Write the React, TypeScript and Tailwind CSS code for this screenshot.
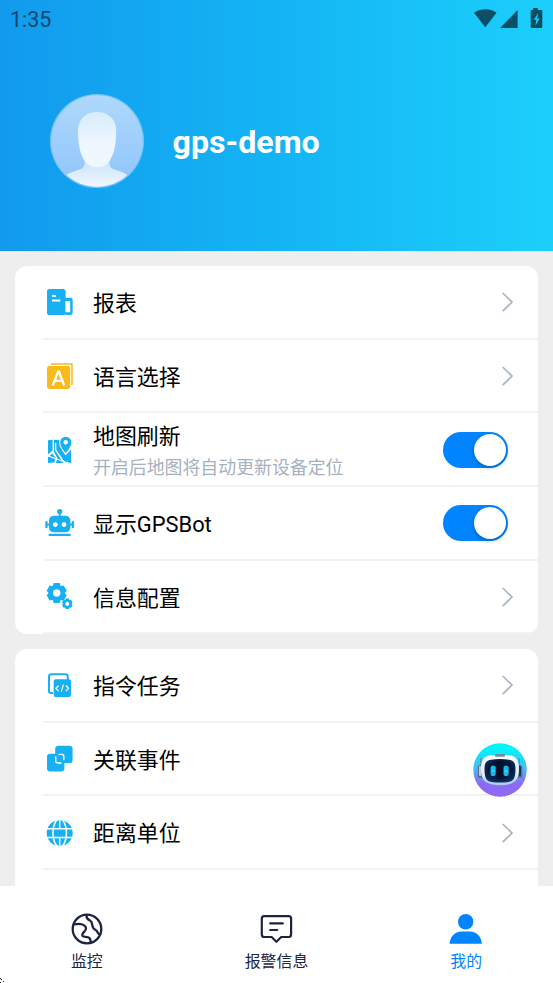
import type { ReactNode } from 'react';

const BLUE = '#17b0f3';

const ReportIcon = () => (
    <svg width="28" height="28" viewBox="0 0 28 28" fill={BLUE}>
        <rect x="18" y="9.7" width="8.7" height="17.3" rx="2.4" />
        <rect x="1" y="1" width="18.6" height="26" rx="2.6" />
        <path fill="#fff" d="M6 7h4v2H6zM6 11.4h8.3v2.2H6zM19.4 13h4.8v11.3h-4.8z" />
    </svg>
);

const LanguageIcon = () => (
    <svg width="28" height="28" viewBox="0 0 28 28" fill="#f9bb1b">
        <path d="M5 2h21v21" fill="none" stroke="#f9bb1b" strokeWidth="1.5" />
        <rect x="1" y="4" width="23.2" height="23" rx="2.4" />
        <path d="M6.800 23.500 12 9.700h1l5.200 13.800M8.600 18.800h7.800" fill="none" stroke="#fff" strokeWidth="2.300" />
    </svg>
);

const MapIcon = () => (
    <svg width="28" height="28" viewBox="0 0 28 28" fill={BLUE}>
        <path d="M2 4.2 6.600 3.800v10.600L2 18.600z" />
        <path d="M8 3.800 14 4.200c-.8 3 .3 6.200 2.200 9.500L19.500 19 25 14V27H9.800L11.500 22.500 8 16z" />
        <path d="M2 21.200 6.300 17.600 9.800 22 8.200 26.500 2 27z" />
        <path d="M9.600 7v7l8.800 13" fill="none" stroke="#fff" strokeWidth="1.400" />
        <path d="M2 19.800 9 22.500 25 27.800" fill="none" stroke="#fff" strokeWidth="1.100" />
        <path d="M19.700 .7a5.500 5.500 0 0 0-5.500 5.500c0 4 3 7.800 5.500 11 2.500-3.200 5.600-7 5.600-11A5.500 5.500 0 0 0 19.700.7z" stroke="#fff" strokeWidth="2.400" paintOrder="stroke" />
        <circle cx="19.700" cy="6.200" r="2.200" fill="#fff" />
    </svg>
);

const RobotIcon = () => (
    <svg className="overflow-visible" width="28" height="28" viewBox="0 0 28 28" fill={BLUE}>
        <circle cx="13.700" cy="2.600" r="2.600" />
        <path d="M12.800 4h1.800v4h-1.800z" />
        <path d="M8 6.800h11.400c3.200 0 5 2 5 5v6.400c0 3-1.800 5-5 5H8c-3.200 0-5-2-5-5v-6.400c0-3 1.800-5 5-5z" />
        <rect x="-.7" y="12" width="2.300" height="7.300" rx="1" />
        <rect x="25.700" y="12" width="2.300" height="7.300" rx="1" />
        <path d="M1 14.500h25.500v2H1z" />
        <rect x="2.700" y="24.700" width="21.800" height="2.400" rx=".6" />
        <circle cx="9.300" cy="15.600" r="2.400" fill="#fff" />
        <circle cx="18" cy="15.600" r="2.400" fill="#fff" />
    </svg>
);

const Gear = ({ cx, cy, scale }: { cx: number; cy: number; scale: number }) => (
    <g transform={`translate(${cx} ${cy}) scale(${scale})`}>
        {[0, 60, 120, 180, 240, 300].map(a => (
            <path key={a} d="M-4.200-6-3-9.900h6L4.200-6z" transform={`rotate(${a})`} />
        ))}
        <circle r="5.900" fill="none" stroke={BLUE} strokeWidth="4.200" />
    </g>
);

const GearsIcon = () => (
    <svg width="28" height="28" viewBox="0 0 28 28" fill={BLUE}>
        <Gear cx={10.7} cy={10} scale={1} />
        <Gear cx={21.3} cy={20.8} scale={0.53} />
    </svg>
);

const CommandIcon = () => (
    <svg width="28" height="28" viewBox="0 0 28 28" fill={BLUE}>
        <rect x="3" y="3.200" width="18.800" height="18.800" rx="2.200" fill="none" stroke={BLUE} strokeWidth="2" />
        <rect x="7" y="7.500" width="19" height="19.500" rx="2.500" fill="#fff" />
        <path d="M20.800 7h2v3h-2z" />
        <rect x="7.700" y="8.300" width="17.400" height="17.700" rx="2.200" />
        <path d="m12.600 14.500-2.700 2.800 2.700 2.800M19.900 14.500l2.700 2.800-2.700 2.800M17.400 13.600l-2.200 7.300" fill="none" stroke="#fff" strokeWidth="1.200" />
    </svg>
);

const LinkIcon = () => (
    <svg width="28" height="28" viewBox="0 0 28 28" fill={BLUE}>
        <rect x="9.200" y=".7" width="17.400" height="17.400" rx="3.200" />
        <rect x="1" y="8.800" width="17.400" height="17.600" rx="3.200" />
        <path d="M9.700 11.500v4.300c0 1.500.7 2.200 2.200 2.200h3.600M12.500 9.400h3.200c1.400 0 2.100.7 2.100 2.100v3.800" fill="none" stroke="#fff" strokeWidth="1.400" />
    </svg>
);

const GlobeIcon = () => (
    <svg width="28" height="28" viewBox="0 0 28 28">
        <circle cx="13.700" cy="14" r="13" fill={BLUE} />
        <g fill="none" stroke="#fff" strokeWidth="1.500">
            <path d="M0 9.700h28M0 18.500h28M13.700 0v9M13.700 19v9" />
            <ellipse cx="13.700" cy="14" rx="6.800" ry="14" />
        </g>
    </svg>
);

const Chevron = () => (
    <svg width="14" height="22" viewBox="0 0 14 22" fill="none" stroke="#a9b4c2" strokeWidth="1.700">
        <path d="m2.700 2 9.300 9.100-9.300 9.100" />
    </svg>
);

const Toggle = () => (
    <div className="mr-[6px] flex h-9 w-[65.500px] items-center justify-end rounded-full bg-[#0084ff] pr-[2px]">
        <div className="size-8 rounded-full bg-white shadow-[0_2px_4px_rgba(0,0,0,0.25)]" />
    </div>
);

interface RowProps {
    icon: ReactNode;
    label: string;
    hint?: string;
    toggle?: boolean;
    control?: boolean;
}

const Row = ({ icon, label, hint, toggle, control = true }: RowProps) => (
    <div className="ml-7 flex h-[73.700px] shrink-0 items-center border-b-2 border-[#f2f2f2] pl-[3px] pr-6 pt-px">
        {icon}
        <div className={hint ? 'ml-[19px] flex-1 pt-1' : 'ml-[19px] flex-1 pt-[2px]'}>
            <div className="text-[21.900px] leading-[31px] text-black">{label}</div>
            {hint && <div className="text-[17.900px] leading-[31px] text-[#a5b1c0]">{hint}</div>}
        </div>
        {toggle ? <Toggle /> : control && <Chevron />}
    </div>
);

const BotBadge = () => (
    <svg className="absolute left-[472px] top-[742px]" width="56" height="56" viewBox="0 0 56 56">
        <defs>
            <linearGradient id="botBg" x1="0" y1="0" x2="0" y2="1">
                <stop offset="0.1" stopColor="#02f5f8" />
                <stop offset="0.5" stopColor="#4eb4f5" />
                <stop offset="0.75" stopColor="#8b6cf4" />
                <stop offset="1" stopColor="#9068f0" />
            </linearGradient>
            <linearGradient id="botHead" x1="0" y1="0" x2="0" y2="1">
                <stop offset="0" stopColor="#ffffff" />
                <stop offset="0.7" stopColor="#dfe9f5" />
                <stop offset="1" stopColor="#a8c4ee" />
            </linearGradient>
            <radialGradient id="botFace" cx="0.5" cy="0.45" r="0.65">
                <stop offset="0.5" stopColor="#03112b" />
                <stop offset="1" stopColor="#064080" />
            </radialGradient>
        </defs>
        <circle cx="28" cy="28" r="27.500" fill="#fff" />
        <circle cx="28" cy="28" r="26.700" fill="url(#botBg)" />
        <path d="M8.700 16v10M47.300 16v10" stroke="#5c8dad" strokeWidth="1.200" />
        <rect x="5.800" y="23" width="6" height="13" rx="2.500" fill="#54708f" />
        <rect x="44.200" y="23" width="6" height="13" rx="2.500" fill="#54708f" />
        <rect x="7" y="24" width="2.500" height="10" rx="1" fill="#bcd0e2" />
        <rect x="46.500" y="24" width="2.500" height="10" rx="1" fill="#1e3657" />
        <path d="M20 13.200h16c8 0 11 5 11 14 0 11-5 16-19 16S9 38.200 9 27.200c0-9 3-14 11-14z" fill="url(#botHead)" />
        <rect x="23" y="12" width="10" height="2.800" rx="1.200" fill="#6d8da9" />
        <path d="M19 17.700c6-1 12-1 18 0 5 .8 6.500 3.500 6.500 9 0 9.500-2 12.500-7 13.200-5.500.8-11.500.8-17 0-5-.7-7-3.700-7-13.200 0-5.500 1.500-8.200 6.500-9z" fill="url(#botFace)" />
        <rect x="18.500" y="23.500" width="5.200" height="10.500" rx="2.600" fill="#15b9ed" />
        <rect x="31.500" y="23.500" width="5.200" height="10.500" rx="2.600" fill="#15b9ed" />
        <path d="M19.200 29h4M32.200 29h4" stroke="#4ad9f8" />
    </svg>
);

const Avatar = () => (
    <svg width="94" height="94" viewBox="0 0 94 94">
        <defs>
            <linearGradient id="avBg" x1="0" y1="0" x2="0" y2="1">
                <stop offset="0" stopColor="#afd8fc" />
                <stop offset="1" stopColor="#8fc5fa" />
            </linearGradient>
            <linearGradient id="avFace" x1="0" y1="0" x2="0" y2="1">
                <stop offset="0" stopColor="#d8ebfc" />
                <stop offset="0.6" stopColor="#eff7fe" />
                <stop offset="1" stopColor="#f0f7fe" />
            </linearGradient>
            <linearGradient id="avBody" x1="0" y1="0" x2="0" y2="1">
                <stop offset="0" stopColor="#bfdefb" />
                <stop offset="1" stopColor="#f1f8fe" />
            </linearGradient>
            <clipPath id="avClip">
                <circle cx="47" cy="47" r="45.700" />
            </clipPath>
        </defs>
        <circle cx="47" cy="47" r="47" fill="#7bc4f8" />
        <circle cx="47" cy="47" r="45.700" fill="url(#avBg)" />
        <g clipPath="url(#avClip)">
            <path d="M34.500 58h25v11.500c0 4 2.500 5.500 7 6.800 5 1.400 9 3.200 13 6.200V94H14V82.500c4-3 8.500-4.800 13.500-6.200 4.500-1.300 7-2.800 7-6.800z" fill="url(#avBody)" />
            <path d="M47 18c11.500 0 19.200 7.500 19.200 18.500C66.200 55 62 73.300 47 73.300S28 55 28 36.500C28 25.500 35.500 18 47 18z" fill="url(#avFace)" />
        </g>
    </svg>
);

const StatusIcons = () => (
    <svg width="70" height="22" viewBox="0 0 70 22" fill="#0c4f64">
        <path d="M0 4.700C6.700.2 16.200.2 22.500 4.700L11.300 19.200z" />
        <path d="M43.600 1.900V20H26.200z" />
        <path d="M59.200 0h4.600v2h3.500c.7 0 1 .4 1 1v15.500c0 .9-.5 1.500-1.300 1.500h-9c-.8 0-1.300-.6-1.300-1.500V3c0-.6.4-1 1-1h1.500z" />
        <path d="m64.300 5-4.600 6.700h2.600l-.9 6 4.300-7.300h-2.600z" fill="#1ac8f8" />
    </svg>
);

const MonitorIcon = () => (
    <svg width="34" height="34" viewBox="0 0 34 34" fill="none" stroke="#1d2443" strokeWidth="2.300">
        <circle cx="17" cy="17" r="14.300" />
        <path d="M4 12.500c3-.8 6-.9 8.500 0 3.500 1.300 4.500 4 2.500 6.300-2 2-3.500 3.200-2.500 5 1.200 1.700 4.700.3 6.700 2 1.400 1.200 1.600 2.700 1.300 4.800M16.500 3c-.3 3 1 4.300 3.500 5.500 2.700 1.400 1.700 4.500 3 7 1.300 2.600 2.800 1.700 4 3.800.8 1.400.8 2.700 2.800 3" />
    </svg>
);

const AlarmIcon = () => (
    <svg width="34" height="34" viewBox="0 0 34 34" fill="none" stroke="#1d2443" strokeWidth="2.200" strokeLinecap="round" strokeLinejoin="round">
        <path d="M4.200 4.200h24.500c1.600 0 2.400.8 2.400 2.400v16c0 1.600-.8 2.400-2.400 2.400h-7.500l-4.800 4.800-4.800-4.800H4.200c-1.600 0-2.400-.8-2.400-2.400v-16c0-1.600.8-2.400 2.400-2.400z" />
        <path d="M10.200 11.400h12.600M10.200 18h7" />
    </svg>
);

const MineIcon = () => (
    <svg width="34" height="34" viewBox="0 0 34 34" fill="#0084ff">
        <circle cx="16.700" cy="9.700" r="7.700" />
        <path d="M.5 31.800c.5-7 5.300-12.300 12.200-12.300h8c6.900 0 11.700 5.300 12.200 12.300z" />
    </svg>
);

const NavItem = ({ icon, label, color }: { icon: ReactNode; label: string; color: string }) => (
    <div className={`flex flex-1 flex-col items-center pt-[26px] ${color}`}>
        {icon}
        <span className="mt-1 text-[15.900px] leading-6">{label}</span>
    </div>
);

export default function App() {
    return (
        <div className="relative flex h-[983px] w-[553px] flex-col overflow-hidden bg-[#eeeeee] font-[Roboto,'Noto_Sans_CJK_SC',sans-serif]">
            {/* Header */}
            <header className="h-[250.500px] shrink-0 bg-linear-to-r from-[#129aed] to-[#1ccffb]">
                <div className="flex h-10 items-start justify-between pl-[10px] pr-[9px] pt-2">
                    <span className="text-[21.500px] leading-[24px] text-[#0b486c]">1:35</span>
                    <StatusIcons />
                </div>
                <div className="flex items-center pl-[50px] pt-[54px]">
                    <Avatar />
                    <h1 className="ml-[28.500px] pt-px text-[32.200px] font-bold leading-10 text-white">gps-demo</h1>
                </div>
            </header>

            {/* Settings */}
            <main className="flex min-h-0 flex-1 flex-col gap-[15px] overflow-hidden px-[15px] pt-[15.500px]">
                <section className="flex h-[368px] shrink-0 flex-col overflow-hidden rounded-xl bg-white">
                    <Row icon={<ReportIcon />} label="报表" />
                    <Row icon={<LanguageIcon />} label="语言选择" />
                    <Row icon={<MapIcon />} label="地图刷新" hint="开启后地图将自动更新设备定位" toggle />
                    <Row icon={<RobotIcon />} label="显示GPSBot" toggle />
                    <Row icon={<GearsIcon />} label="信息配置" />
                </section>
                <section className="flex shrink-0 flex-col overflow-hidden rounded-xl bg-white">
                    <Row icon={<CommandIcon />} label="指令任务" />
                    <Row icon={<LinkIcon />} label="关联事件" control={false} />
                    <Row icon={<GlobeIcon />} label="距离单位" />
                    <div className="h-[74px]" />
                </section>
            </main>

            {/* Tab bar */}
            <nav className="h-[97px] shrink-0 bg-white">
                <div className="-mx-2 flex">
                    <NavItem icon={<MonitorIcon />} label="监控" color="text-[#1d2443]" />
                    <NavItem icon={<AlarmIcon />} label="报警信息" color="text-[#1d2443]" />
                    <NavItem icon={<MineIcon />} label="我的" color="text-[#0084ff]" />
                </div>
            </nav>

            <BotBadge />
            <svg className="absolute bottom-0 left-0" width="5" height="5" viewBox="0 0 5 5">
                <path d="M0 0h1v1H0zM1 1h1v1H1zM3 3h1v1H3zM0 4h1v1H0z" fill="#222" />
            </svg>
        </div>
    );
}
